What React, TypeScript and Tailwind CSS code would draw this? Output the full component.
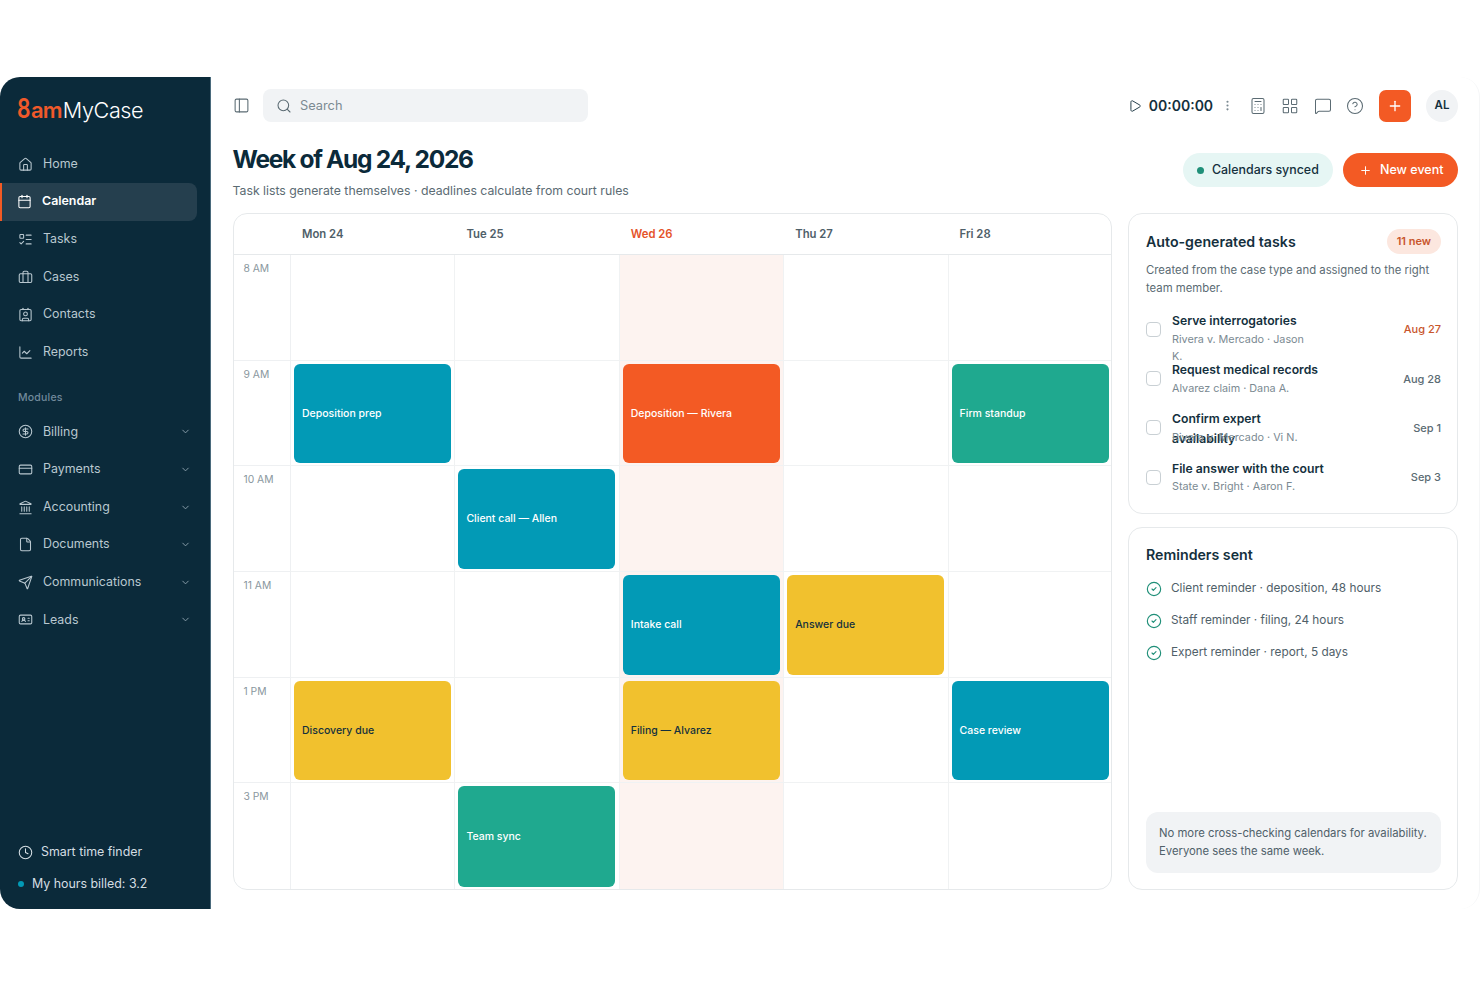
import { House, Calendar, ListTodo, Briefcase, Contact, ChartLine, CircleDollarSign, CreditCard, Landmark, File, Send, IdCard, ChevronDown, Clock, PanelLeft, Search, Play, EllipsisVertical, Calculator, LayoutGrid, MessageSquare, CircleHelp, Plus, CircleCheck } from "lucide-react";

const top = [
  { label: "Home", Icon: House },
  { label: "Calendar", Icon: Calendar, active: true },
  { label: "Tasks", Icon: ListTodo },
  { label: "Cases", Icon: Briefcase },
  { label: "Contacts", Icon: Contact },
  { label: "Reports", Icon: ChartLine },
];
const modules = [
  { label: "Billing", Icon: CircleDollarSign },
  { label: "Payments", Icon: CreditCard },
  { label: "Accounting", Icon: Landmark },
  { label: "Documents", Icon: File },
  { label: "Communications", Icon: Send },
  { label: "Leads", Icon: IdCard },
];
const days = ["Mon 24", "Tue 25", "Wed 26", "Thu 27", "Fri 28"];
const times = ["8 AM", "9 AM", "10 AM", "11 AM", "1 PM", "3 PM"];
const teal = "bg-[#029ab6] text-white";
const orange = "bg-[#f35a24] text-white";
const green = "bg-[#1fa98f] text-white";
const yellow = "bg-[#f1c12e] text-[#14303d]";
const grid: ([string, string] | null)[][] = [
  [null, null, null, null, null],
  [["Deposition prep", teal], null, ["Deposition — Rivera", orange], null, ["Firm standup", green]],
  [null, ["Client call — Allen", teal], null, null, null],
  [null, null, ["Intake call", teal], ["Answer due", yellow], null],
  [["Discovery due", yellow], null, ["Filing — Alvarez", yellow], null, ["Case review", teal]],
  [null, ["Team sync", green], null, null, null],
];
const tasks = [
  { t: "Serve interrogatories", s: "Rivera v. Mercado · Jason\nK.", d: "Aug 27", hot: true },
  { t: "Request medical records", s: "Alvarez claim · Dana A.", d: "Aug 28" },
  { t: "Confirm expert\navailability", s: "Rivera v. Mercado · Vi N.", d: "Sep 1" },
  { t: "File answer with the court", s: "State v. Bright · Aaron F.", d: "Sep 3" },
];
const reminders = ["Client reminder · deposition, 48 hours", "Staff reminder · filing, 24 hours", "Expert reminder · report, 5 days"];

function Sidebar() {
  return (
    <aside className="w-[211px] shrink-0 bg-[#0b2a3a] border-r border-[#4a6a7c] flex flex-col">
      <div className="h-[68.5px] pl-[17px] pt-[14px] flex items-baseline">
        <span className="inline-block w-[14px] origin-left scale-x-[0.78] text-[27px] leading-[36px] font-semibold text-[#f0592a]">8</span>
        <span className="text-[22px] leading-[36px] font-semibold tracking-[-0.8px] text-[#f0592a]">am</span>
        <span className="text-[21.6px] leading-[36px] font-light tracking-[-0.4px] text-white ml-[1px]">MyCase</span>
      </div>
      <nav className="flex flex-col">
        {top.map(({ label, Icon, active }) =>
          active ? (
            <div key={label} className="h-[38px] mr-[13px] my-[-0.2px] flex items-center bg-[#253f4e] border-l-[2px] border-[#f35a24] rounded-r-[8px] pl-[15px] pb-[1px] gap-[10px] text-white font-semibold text-[12.4px]">
              <Icon size={15} strokeWidth={1.7} />
              {label}
            </div>
          ) : (
            <div key={label} className="h-[37.6px] flex items-center pl-[18px] gap-[10px] text-[#b9c8d0] text-[12.4px]">
              <Icon size={15} strokeWidth={1.7} />
              {label}
            </div>
          )
        )}
      </nav>
      <div className="pl-[18px] pt-[18.5px] pb-[7.5px] text-[10.5px] leading-[16px] font-medium text-[#71899a] tracking-[0.2px]">Modules</div>
      <nav className="flex flex-col">
        {modules.map(({ label, Icon }) => (
          <div key={label} className="h-[37.6px] flex items-center pl-[18px] pr-[19px] gap-[10px] text-[#b9c8d0] text-[12.4px]">
            <Icon size={15} strokeWidth={1.7} />
            <span className="flex-1">{label}</span>
            <ChevronDown size={11} className="text-[#8fa3af]" />
          </div>
        ))}
      </nav>
      <div className="mt-auto pb-[15px] pl-[18px] text-[12.4px] text-[#d5dee3]">
        <div className="h-[20px] flex items-center gap-[8px]">
          <Clock size={15} strokeWidth={1.7} />
          Smart time finder
        </div>
        <div className="h-[20px] mt-[12px] flex items-center gap-[8px]">
          <span className="w-[6px] h-[6px] rounded-full bg-[#029ab6]" />
          My hours billed: 3.2
        </div>
      </div>
    </aside>
  );
}

function Topbar() {
  return (
    <div className="h-[33px] flex items-center">
      <PanelLeft size={17} strokeWidth={1.5} className="text-[#5b6b73]" />
      <div className="ml-[13.5px] w-[325px] h-[33px] rounded-[8px] bg-[#f1f3f5] flex items-center pl-[13px] gap-[8px] text-[12.8px] text-[#7b8a92]">
        <Search size={16} strokeWidth={1.6} className="text-[#5b6b73]" />
        Search
      </div>
      <div className="ml-auto flex items-center">
        <Play size={14} strokeWidth={1.6} className="text-[#14303d]" />
        <span className="ml-[7px] text-[14px] font-semibold text-[#14303d]">00:00:00</span>
        <EllipsisVertical size={13} className="ml-[7.5px] text-[#7b8a92]" />
        <Calculator size={18} strokeWidth={1.4} className="ml-[15.5px] text-[#5b6b73]" />
        <LayoutGrid size={18} strokeWidth={1.4} className="ml-[14.3px] text-[#5b6b73]" />
        <MessageSquare size={18} strokeWidth={1.4} className="ml-[14.3px] text-[#5b6b73]" />
        <CircleHelp size={18} strokeWidth={1.4} className="ml-[14.3px] text-[#5b6b73]" />
        <div className="ml-[15px] w-[32px] h-[32px] rounded-[7px] bg-[#f35a24] flex items-center justify-center text-white">
          <Plus size={16} strokeWidth={2} />
        </div>
        <div className="ml-[15px] w-[32px] h-[32px] rounded-full bg-[#f1f3f5] flex items-center justify-center text-[11.5px] font-semibold text-[#14303d]">AL</div>
      </div>
    </div>
  );
}

function CalendarCard() {
  return (
    <section className="flex-1 min-w-0 h-[677px] border border-[#e6e9eb] rounded-[14px] overflow-hidden flex flex-col">
      <div className="h-[41px] shrink-0 grid grid-cols-[57.5px_repeat(5,164.4px)] border-b border-[#e6e9eb] items-center text-[11.3px] font-semibold">
        <div />
        {days.map((d, i) => (
          <div key={d} className={i === 2 ? "pl-[11px] text-[#e5532a]" : "pl-[11px] text-[#4f6069]"}>{d}</div>
        ))}
      </div>
      <div className="flex-1 grid grid-cols-[57.5px_repeat(5,164.4px)] grid-rows-[repeat(6,1fr)]">
        {grid.map((row, r) => (
          <div key={r} className="contents">
            <div className={`border-r border-[#eef0f2] pl-[10px] pt-[5px] text-[10.3px] leading-[16px] text-[#8a979e] ${r < 5 ? "border-b" : ""}`}>{times[r]}</div>
            {row.map((ev, c) => (
              <div key={c} className={`pl-[3px] pr-[3.4px] pt-[3px] pb-[2px] border-r border-[#f0f2f3] ${c === 2 ? "bg-[#fdf3f0]" : ""} ${r < 5 ? "border-b" : ""}`}>
                {ev && (
                  <div className={`h-full rounded-[6px] flex items-center px-[8px] text-[10.5px] font-medium ${ev[1]}`}>{ev[0]}</div>
                )}
              </div>
            ))}
          </div>
        ))}
      </div>
    </section>
  );
}

function RightColumn() {
  return (
    <div className="w-[330px] shrink-0 flex flex-col gap-[13px] h-[677px]">
      <section className="h-[301px] shrink-0 border border-[#e6e9eb] rounded-[14px] pl-[17px] pr-[16px] pt-[15px]">
        <div className="flex items-center justify-between h-[25px]">
          <h2 className="text-[14.2px] font-semibold text-[#14303d]">Auto-generated tasks</h2>
          <span className="h-[25px] px-[10px] rounded-full bg-[#fce7df] flex items-center text-[11px] font-semibold text-[#c8552c]">11 new</span>
        </div>
        <p className="mt-[7px] text-[11.35px] leading-[18px] text-[#5b6b73]">Created from the case type and assigned to the right team member.</p>
        <div className="mt-[8px]">
          {tasks.map((x) => (
            <div key={x.d} className="h-[49.2px] flex items-center">
              <span className="w-[15px] h-[15px] rounded-[4px] border border-[#c9d0d4] shrink-0" />
              <div className="ml-[11px] flex-1 min-w-0 h-[37px]">
                <div className="h-[19.5px] text-[12.2px] leading-[19.5px] font-semibold text-[#14303d] whitespace-pre-line">{x.t}</div>
                <div className="text-[10.8px] leading-[17.6px] text-[#7b8a92] whitespace-pre-line">{x.s}</div>
              </div>
              <span className={`text-[11px] font-medium ${x.hot ? "text-[#c8552c]" : "text-[#5b6b73]"}`}>{x.d}</span>
            </div>
          ))}
        </div>
      </section>
      <section className="flex-1 border border-[#e6e9eb] rounded-[14px] pl-[17px] pr-[16px] pt-[16px] pb-[15px] flex flex-col">
        <h2 className="h-[21px] text-[14.2px] leading-[21px] font-semibold text-[#14303d]">Reminders sent</h2>
        <div className="mt-[8px]">
          {reminders.map((m) => (
            <div key={m} className="h-[32px] flex items-center gap-[9px] text-[11.8px] text-[#4f6069]">
              <CircleCheck size={16} strokeWidth={1.7} className="text-[#1f8f78]" />
              {m}
            </div>
          ))}
        </div>
        <div className="mt-auto h-[61px] mb-[1px] rounded-[12px] bg-[#f1f3f5] px-[13px] pb-[1px] flex items-center text-[11.3px] leading-[18px] text-[#4f6069]">
          <p>No more cross-checking calendars for availability. Everyone sees the same week.</p>
        </div>
      </section>
    </div>
  );
}

export default function App() {
  return (
    <div className="bg-white w-[1480px] h-[987px] overflow-hidden pt-[77px] font-['Inter',sans-serif]">
      <div className="h-[832px] rounded-[20px] overflow-hidden flex border-r border-[#f5f6f7]">
        <Sidebar />
        <main className="flex-1 min-w-0 pl-[21.5px] pr-[21px] pt-[12px]">
          <Topbar />
          <div className="flex items-start justify-between h-[91px] pt-[21px]">
            <div>
              <h1 className="text-[24.5px] leading-[32px] font-bold tracking-[-1.3px] text-[#0b2a3a]">Week of Aug 24, 2026</h1>
              <p className="mt-[7px] text-[12.28px] leading-[18px] text-[#5b6b73]">Task lists generate themselves · deadlines calculate from court rules</p>
            </div>
            <div className="flex items-center gap-[10px] mt-[10px]">
              <div className="h-[34px] w-[150px] pl-[14px] rounded-full bg-[#e6f6f4] flex items-center gap-[8px] text-[12.4px] font-medium text-[#14303d]">
                <span className="w-[7px] h-[7px] rounded-full bg-[#1f8f78]" />
                Calendars synced
              </div>
              <div className="h-[34px] w-[115px] pl-[16px] rounded-full bg-[#f35a24] flex items-center gap-[8px] text-[12.5px] font-medium text-white">
                <Plus size={13} strokeWidth={1.8} />
                New event
              </div>
            </div>
          </div>
          <div className="flex gap-[16px]">
            <CalendarCard />
            <RightColumn />
          </div>
        </main>
      </div>
    </div>
  );
}
